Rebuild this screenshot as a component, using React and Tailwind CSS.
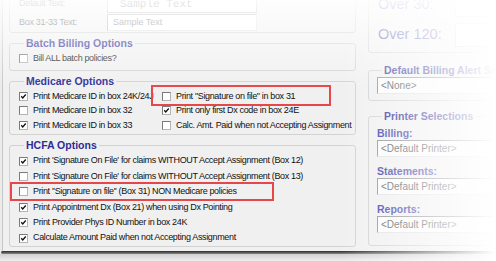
import React from "react";

const Check = ({ checked }) => (
    <span className="w-[9px] h-[9px] shrink-0 bg-white border border-[#7a7a7a] border-r-[#b5b5b5] border-b-[#b5b5b5] flex items-center justify-center">
        {checked && (
            <svg viewBox="0 0 9 9" className="w-[9px] h-[9px]">
                <path d="M1.6 4.2 L3.5 6.3 L7.4 2" stroke="#111" strokeWidth="1.7" fill="none" />
            </svg>
        )}
    </span>
);

const Row = ({ checked, label, h = "h-[15px]", children }) => (
    <div className={`relative flex items-center gap-[5px] ${h}`}>
        <Check checked={checked} />
        <span className="whitespace-nowrap text-[9px] tracking-[-0.35px] text-[#111]">{label}</span>
        {children}
    </div>
);

const RedBox = ({ className }) => (
    <div className={`absolute border-2 border-[#e6474a] pointer-events-none ${className}`} />
);

const Legend = ({ children, className = "" }) => (
    <legend className={`ml-[5px] px-[2px] text-[10.5px] leading-[13px] font-bold text-[#2d2d98] ${className}`}>
        {children}
    </legend>
);

const Select = ({ children }) => (
    <div className="h-[17px] w-[150px] bg-[#fbfbfb] border border-[#8f8f8f] border-r-[#e2e2e2] border-b-[#e2e2e2] flex items-center pl-[3px] text-[10px] text-[#555]">
        {children}
    </div>
);

export default function App() {
    return (
        <div className="relative w-[496px] h-[261px] overflow-hidden bg-[#ebebeb] font-['Liberation_Sans',Arial,sans-serif]">
            <div className="h-[251px] ml-[2px] border-l border-[#c6c6c6] bg-[#f0f0f0] flex gap-[12px] pl-[6px]">
                {/* left column */}
                <div className="w-[347px] shrink-0 flex flex-col">
                    <div className="-mt-[12px] h-[45px] border border-[#d2d2d2] rounded-[3px] pt-[7px] pl-[9px] flex flex-col gap-[2px]">
                        <div className="h-[16px] flex items-center">
                            <span className="w-[88px] text-[9px] tracking-[-0.3px] text-[#555]">Default Text:</span>
                            <div className="h-[18px] w-[150px] bg-white border border-[#b0b0b0] flex items-center pl-[12px] font-['Liberation_Mono',monospace] text-[11px] text-[#444]">
                                Sample Text
                            </div>
                        </div>
                        <div className="h-[17px] flex items-center">
                            <span className="w-[88px] text-[9px] tracking-[-0.3px] text-[#444]">Box 31-33 Text:</span>
                            <div className="h-[17px] w-[150px] bg-white border border-[#a8a8a8] border-r-[#dedede] border-b-[#dedede] flex items-center pl-[5px] text-[9px] text-[#666]">
                                Sample Text
                            </div>
                        </div>
                    </div>

                    <fieldset className="mt-[4px] border border-[#d2d2d2] rounded-[3px] pl-[9px] pb-[4px]">
                        <Legend>Batch Billing Options</Legend>
                        <div className="pt-[1px]">
                            <Row label="Bill ALL batch policies?" />
                        </div>
                    </fieldset>

                    <fieldset className="mt-[4px] border border-[#d2d2d2] rounded-[3px] pl-[9px] pb-[1.5px]">
                        <Legend>Medicare Options</Legend>
                        <div className="pt-[1px] grid grid-cols-[143px_1fr]">
                            <Row checked label="Print Medicare ID in box 24K/24J" h="h-[14.5px]" />
                            <Row label={'Print "Signature on file" in box 31'} h="h-[14.5px]">
                                <RedBox className="-left-[11px] -top-[4px] w-[180px] h-[21px]" />
                            </Row>
                            <Row label="Print Medicare ID in box 32" h="h-[14.5px]" />
                            <Row checked label="Print only first Dx code in box 24E" h="h-[14.5px]" />
                            <Row checked label="Print Medicare ID in box 33" h="h-[14.5px]" />
                            <Row label="Calc. Amt. Paid when not Accepting Assignment" h="h-[14.5px]" />
                        </div>
                    </fieldset>

                    <fieldset className="mt-[3.5px] border border-[#d2d2d2] rounded-[3px] pl-[9px] pb-[0.5px]">
                        <Legend>HCFA Options</Legend>
                        <div className="pt-[2px]">
                            <Row checked label="Print 'Signature On File' for claims WITHOUT Accept Assignment (Box 12)" h="h-[15.4px]" />
                            <Row label="Print 'Signature On File' for claims WITHOUT Accept Assignment (Box 13)" h="h-[15.4px]" />
                            <Row label={"Print ''Signature on file'' (Box 31) NON Medicare policies"} h="h-[15.4px]">
                                <RedBox className="-left-[9px] -top-[2px] w-[264px] h-[19px]" />
                            </Row>
                            <Row checked label="Print Appointment Dx (Box 21) when using Dx Pointing" h="h-[15.4px]" />
                            <Row checked label="Print Provider Phys ID Number in box 24K" h="h-[15.4px]" />
                            <Row checked label="Calculate Amount Paid when not Accepting Assignment" h="h-[15.4px]" />
                        </div>
                    </fieldset>
                </div>

                {/* right column */}
                <div className="w-[170px] shrink-0 flex flex-col">
                    <div className="-mt-[20px] h-[73px] border border-[#d2d2d2] rounded-[3px] pl-[9px] pt-[12px] flex flex-col gap-[6px]">
                        <div className="h-[24px] flex items-center">
                            <span className="w-[77px] text-[14.5px] text-[#3a3aa0]">Over 30:</span>
                            <div className="h-[24px] flex-1 bg-white border border-[#c8c8c8]" />
                        </div>
                        <div className="h-[24px] flex items-center">
                            <span className="w-[77px] text-[14.5px] text-[#3a3aa0]">Over 120:</span>
                            <div className="h-[24px] flex-1 bg-white border border-[#c8c8c8]" />
                        </div>
                    </div>

                    <fieldset className="mt-[10.5px] border border-[#d2d2d2] rounded-[3px] pl-[8px] pb-[6px]">
                        <Legend className="ml-[0px] px-[1px]">Default Billing Alert Setting</Legend>
                        <div className="pt-[0.5px]">
                            <Select>&lt;None&gt;</Select>
                        </div>
                    </fieldset>

                    <fieldset className="mt-[8.5px] border border-[#d2d2d2] rounded-[3px] pl-[8px] pb-[12px]">
                        <Legend className="ml-[0px] px-[1px]">Printer Selections</Legend>
                        <div className="pt-[4px] flex flex-col">
                            <span className="h-[12px] leading-[12px] text-[10.5px] font-bold text-[#3a3aa8]">Billing:</span>
                            <div className="mt-[1px]"><Select>&lt;Default Printer&gt;</Select></div>
                            <span className="mt-[8px] h-[12px] leading-[12px] text-[10.5px] font-bold text-[#3a3aa8]">Statements:</span>
                            <div className="mt-[1px]"><Select>&lt;Default Printer&gt;</Select></div>
                            <span className="mt-[8px] h-[12px] leading-[12px] text-[10.5px] font-bold text-[#3a3aa8]">Reports:</span>
                            <div className="mt-[1px]"><Select>&lt;Default Printer&gt;</Select></div>
                        </div>
                    </fieldset>
                </div>
            </div>

            {/* bottom edge shadow */}
            <div className="h-[3px] ml-[1px] rounded-l-full bg-gradient-to-b from-[#2a2a2a] to-[#8a8a8a]" />
            <div className="h-[7px] bg-gradient-to-b from-[#cfcfcf] to-[#efefef]" />

            {/* fades */}
            <div className="absolute inset-0 pointer-events-none bg-[linear-gradient(to_bottom,rgba(255,255,255,0.9)_0px,rgba(255,255,255,0)_88px)]" />
            <div className="absolute inset-0 pointer-events-none bg-[linear-gradient(to_right,rgba(255,255,255,0)_340px,rgba(255,255,255,1)_496px)]" />
        </div>
    );
}
